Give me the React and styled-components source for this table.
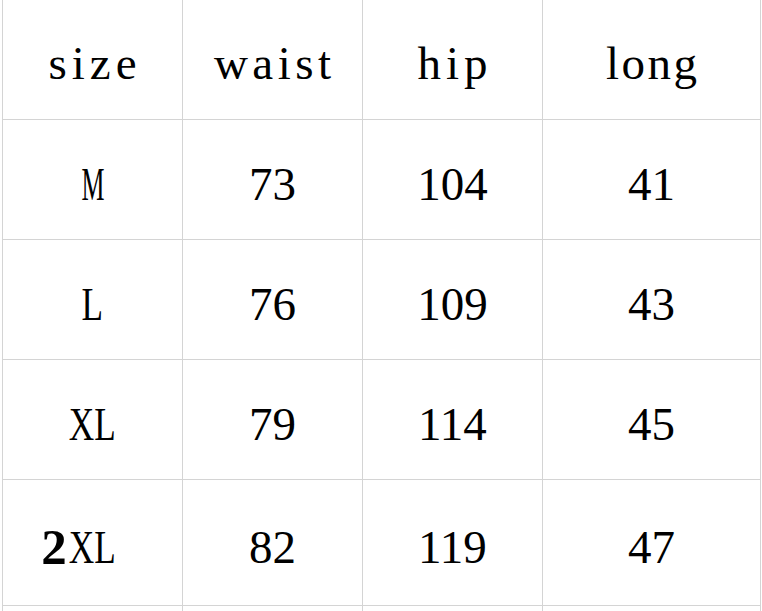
import React from "react";
import styled, { createGlobalStyle } from "styled-components";

const Global = createGlobalStyle`
  html, body { margin: 0; padding: 0; background: #ffffff; overflow: hidden; }
  body { width: 762px; height: 611px; }
`;

const Page = styled.div`
  padding-left: 2px;
  width: 762px;
  height: 611px;
  box-sizing: border-box;
  overflow: hidden;
`;

const Table = styled.div`
  display: flex;
  flex-direction: column;
  width: 759px;
`;

const Row = styled.div`
  display: grid;
  grid-template-columns: 180px 180px 180px 219px;
  height: ${(p) => p.$h}px;
`;

const Cell = styled.div`
  box-sizing: border-box;
  border-left: 1px solid #d4d4d4;
  border-bottom: 1px solid #d4d4d4;
  ${(p) => (p.$last ? "border-right: 1px solid #d4d4d4;" : "")}
  display: flex;
  align-items: center;
  justify-content: center;
  padding-top: ${(p) => p.$pt ?? 10}px;
  font-family: "Liberation Serif", "Times New Roman", serif;
  font-size: 47px;
  line-height: 1;
  color: #000;
  letter-spacing: ${(p) => p.$ls ?? 0}px;
  white-space: nowrap;
`;

const Word = styled.span`
  display: inline-block;
  margin-right: ${(p) => -(p.$ls ?? 0)}px;
`;

const Narrow = styled.span`
  display: inline-block;
  transform: scaleX(${(p) => p.$sx});
  transform-origin: center;
  margin: 0 ${(p) => p.$m ?? 0}px;
`;

const Bold = styled.span`
  display: inline-block;
  font-weight: 700;
  font-size: 51px;
  width: 25px;
  margin-left: -28px;
  margin-right: 3px;
`;

const header = [
  { t: "size", ls: 5 },
  { t: "waist", ls: 4.5 },
  { t: "hip", ls: 5 },
  { t: "long", ls: 2.5 },
];

const data = [
  { size: <Narrow $sx={0.55} $m={-9}>M</Narrow>, v: ["73", "104", "41"] },
  { size: <Narrow $sx={0.75} $m={-3}>L</Narrow>, v: ["76", "109", "43"] },
  {
    size: <Narrow $sx={0.75} $m={-8}>XL</Narrow>,
    v: ["79", "114", "45"],
  },
  {
    size: (
      <>
        <Bold>2</Bold>
        <Narrow $sx={0.75} $m={-8}>XL</Narrow>
      </>
    ),
    v: ["82", "119", "47"],
    h: 126,
  },
];

export default function App() {
  return (
    <Page>
      <Global />
      <Table>
        <Row $h={120}>
          {header.map((h, i) => (
            <Cell key={h.t} $ls={h.ls} $pt={8} $last={i === 3}>
              <Word $ls={h.ls}>{h.t}</Word>
            </Cell>
          ))}
        </Row>
        {data.map((r, ri) => (
          <Row key={ri} $h={r.h ?? 120}>
            <Cell>{r.size}</Cell>
            {r.v.map((v, i) => (
              <Cell key={i} $last={i === 2}>
                {v}
              </Cell>
            ))}
          </Row>
        ))}
        <Row $h={40}>
          <Cell />
          <Cell />
          <Cell />
          <Cell $last />
        </Row>
      </Table>
    </Page>
  );
}
